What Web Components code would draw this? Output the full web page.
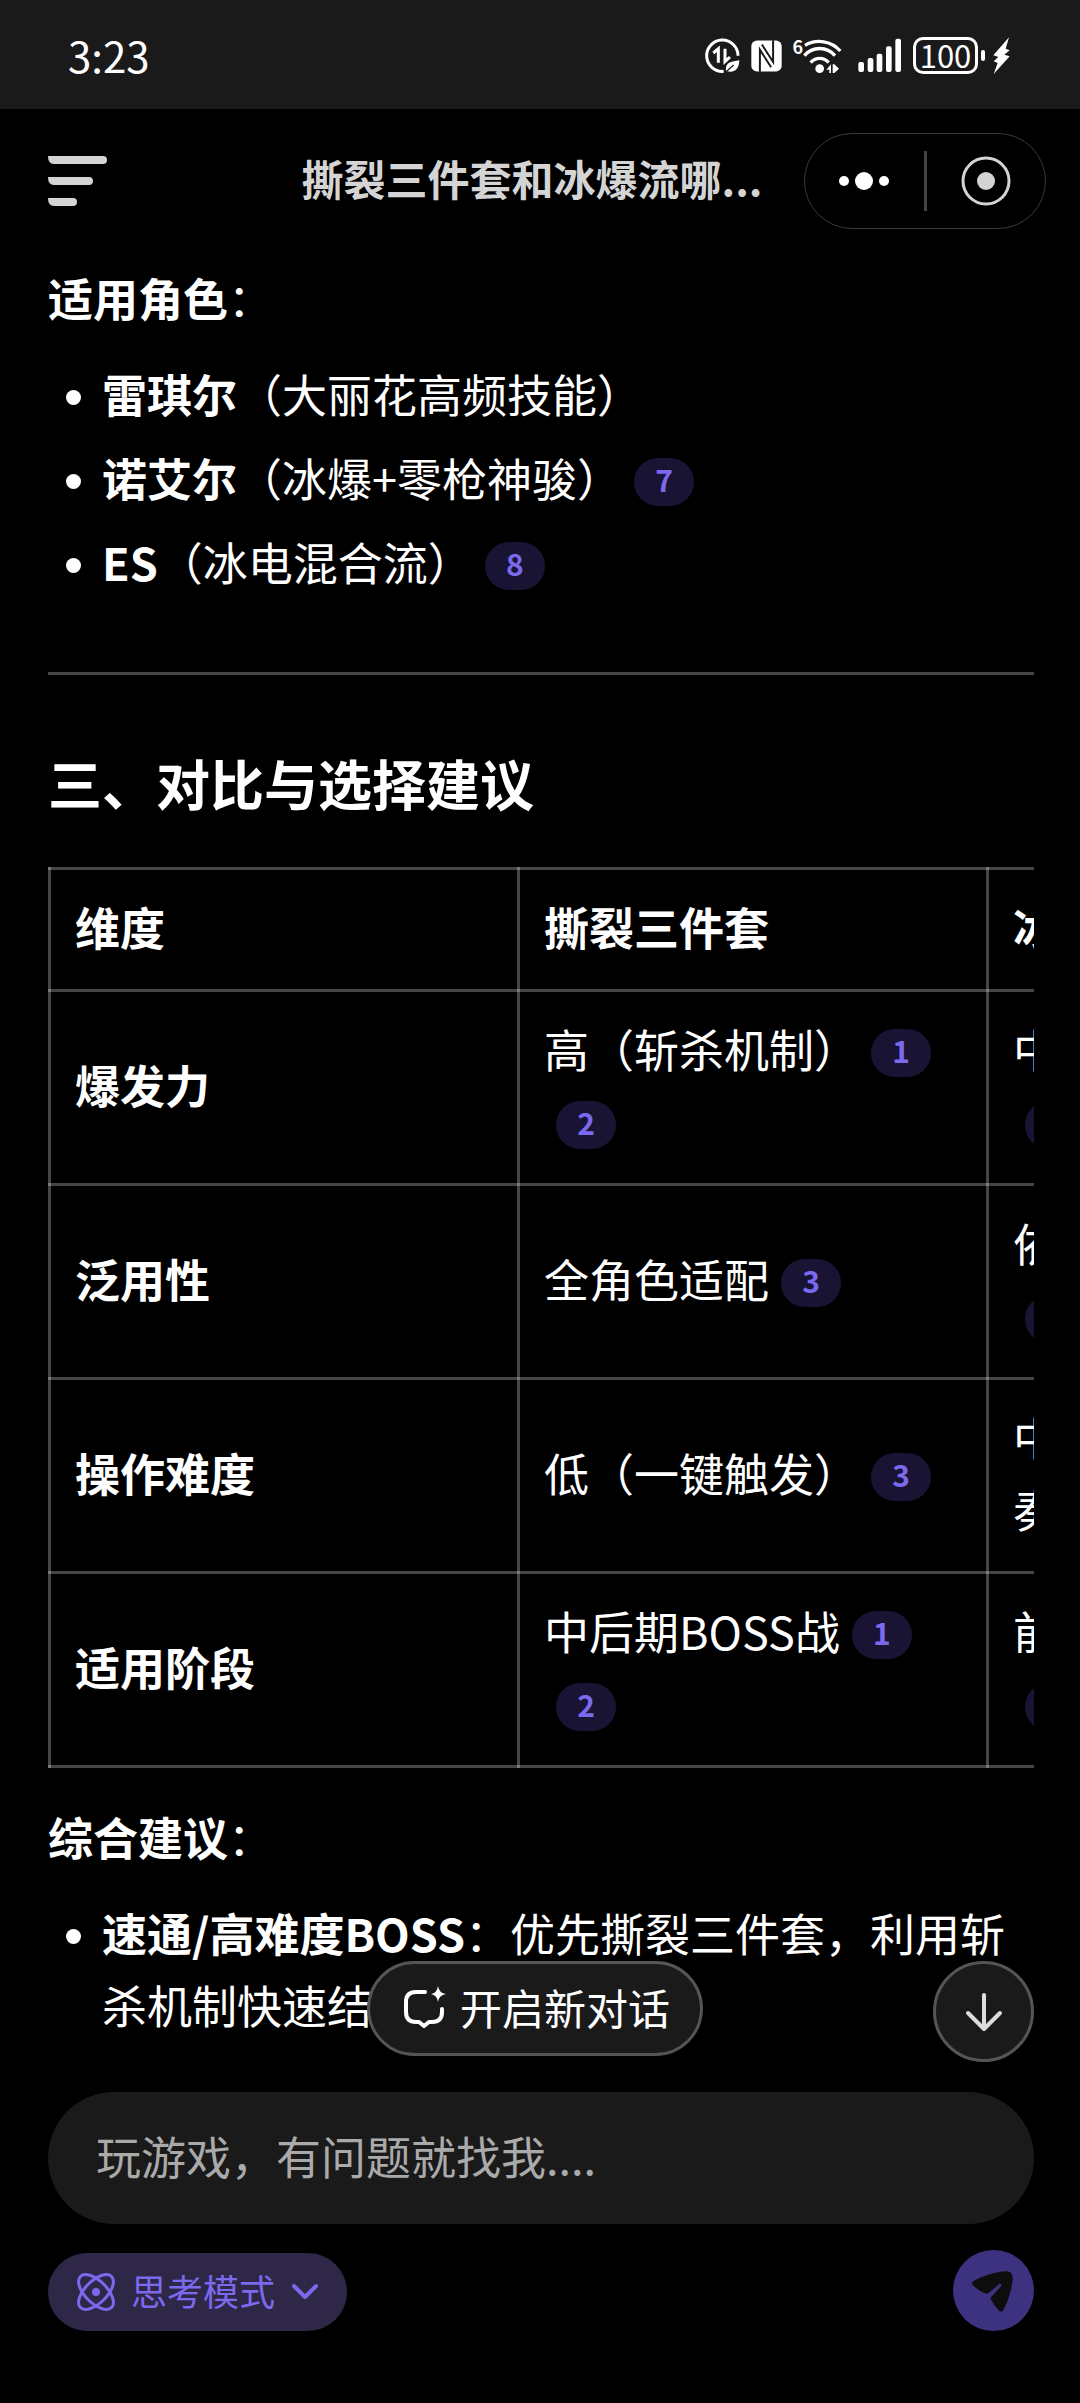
<!DOCTYPE html>
<html lang="zh-CN">
<head>
<meta charset="utf-8">
<meta name="viewport" content="width=device-width, initial-scale=1">
<title>撕裂三件套和冰爆流哪...</title>
<style>
    html, body {
        margin: 0;
        background: #000;
    }

    body {
        --surface: #1a1a1a;
        --line: rgba(255, 255, 255, 0.27);
        --outline: #555;
        --icon: #d4d4d4;
        --accent: #7b69ee;
        --accent-dim: #191433;
        color: #fff;
        font-family: "Noto Sans CJK SC", "Noto Sans", sans-serif;
        font-size: 45px;
        line-height: 72px;
    }
</style>
</head>
<body>
<chat-app>
    <status-bar slot="status" time="3:23" battery="100"></status-bar>
    <nav-bar slot="nav">撕裂三件套和冰爆流哪...</nav-bar>

    <section-label>适用角色</section-label>
    <bullet-list>
        <bullet-item><b>雷琪尔</b>（大丽花高频技能）</bullet-item>
        <bullet-item><b>诺艾尔</b>（冰爆+零枪神骏）<cite-badge>7</cite-badge></bullet-item>
        <bullet-item><b>ES</b>（冰电混合流）<cite-badge>8</cite-badge></bullet-item>
    </bullet-list>
    <section-title>三、对比与选择建议</section-title>
    <compare-table></compare-table>
    <section-label>综合建议</section-label>
    <bullet-list>
        <bullet-item><b>速通/高难度BOSS</b>：优先撕裂三件套，利用斩杀机制快速结</bullet-item>
    </bullet-list>

    <chat-composer slot="composer" placeholder="玩游戏，有问题就找我...."></chat-composer>
</chat-app>

<script>
class ChatApp extends HTMLElement {
    constructor() {
        super();
        this.attachShadow({ mode: 'open' });
        this.shadowRoot.innerHTML = `
            <style>
                :host {
                    display: flex;
                    flex-direction: column;
                    height: 100vh;
                }

                main {
                    flex: 1;
                    min-height: 0;
                    overflow: hidden;
                    padding: 9px 46px 0 48px;
                }
            </style>

            <slot name="status"></slot>
            <slot name="nav"></slot>
            <main><slot></slot></main>
            <slot name="composer"></slot>
        `;
    }
}

class StatusBar extends HTMLElement {
    constructor() {
        super();
        this.attachShadow({ mode: 'open' });
    }

    connectedCallback() {
        this.shadowRoot.innerHTML = `
            <style>
                :host {
                    display: flex;
                    flex: none;
                    box-sizing: border-box;
                    height: 109px;
                    padding: 0 70px 0 68px;
                    justify-content: space-between;
                    align-items: center;
                    background: var(--surface);
                }

                .time {
                    font-size: 42px;
                }

                .icons {
                    display: flex;
                    padding-top: 2px;
                    align-items: center;
                }

                svg {
                    display: block;
                }

                .save { margin-right: 11px; }
                .nfc { margin-right: 10px; }
                .wifi-gen {
                    align-self: flex-start;
                    font-size: 18px;
                    font-weight: 700;
                    line-height: 18px;
                }
                .wifi { margin-right: 16px; }
                .signal { margin-right: 12px; }

                .battery {
                    box-sizing: border-box;
                    width: 65px;
                    height: 37px;
                    border: 3px solid #fff;
                    border-radius: 10px;
                    font-size: 31px;
                    line-height: 29px;
                    text-align: center;
                }

                .nub {
                    width: 4px;
                    height: 11px;
                    margin: 0 8px 0 3px;
                    border-radius: 2px;
                    background: #fff;
                }
            </style>

            <span class="time">${this.getAttribute('time')}</span>
            <div class="icons">
                <svg class="save" width="35" height="35" viewBox="78 115 105 105" fill="none" stroke="#fff">
                    <path d="M134 215A47 47 0 1 1 177 168" stroke-width="9"/>
                    <path d="M103 160L118 147V189M138 147V186L153 172" stroke-width="9"/>
                    <path d="M141 214C138 188 156 186 181 182C180 208 168 222 141 214Z" fill="#fff" stroke="none"/>
                    <path d="M138 219L164 196" stroke="#1a1a1a" stroke-width="4"/>
                </svg>
                <svg class="nfc" width="31" height="32" viewBox="216 121 94 96">
                    <rect x="217" y="122" width="92" height="94" rx="17" fill="#fff"/>
                    <path d="M243 217V150L277 203M283 121V187L249 134" fill="none" stroke="#1a1a1a" stroke-width="6"/>
                </svg>
                <span class="wifi-gen">6</span>
                <svg class="wifi" width="39" height="36" viewBox="368 111 117 108" fill="none" stroke="#fff" stroke-width="10">
                    <path d="M374 133A84 84 0 0 1 480 150M372 164A60 60 0 0 1 464 164M391 185A35 35 0 0 1 445 185"/>
                    <circle cx="418" cy="203" r="13" fill="#fff" stroke="none"/>
                    <path d="M438 206L452 190V216H447V206ZM457 190H462L476 203L462 216H457Z" fill="#fff" stroke="none"/>
                </svg>
                <svg class="signal" width="43" height="35" viewBox="533 114 129 105" fill="#fff">
                    <rect x="534" y="186" width="17" height="30" rx="6"/>
                    <rect x="562" y="174" width="17" height="42" rx="6"/>
                    <rect x="589" y="161" width="17" height="55" rx="6"/>
                    <rect x="617" y="139" width="17" height="77" rx="6"/>
                    <rect x="645" y="116" width="17" height="100" rx="6"/>
                </svg>
                <div class="battery">${this.getAttribute('battery')}</div>
                <div class="nub"></div>
                <svg width="17" height="37" viewBox="937 111 51 111" fill="#fff">
                    <path d="M985 112L938 166L953 171L939 184L951 189L939 222L987 169L971 164L987 151L975 146Z"/>
                </svg>
            </div>
        `;
    }
}

class NavBar extends HTMLElement {
    constructor() {
        super();
        this.attachShadow({ mode: 'open' });
        this.shadowRoot.innerHTML = `
            <style>
                :host {
                    display: grid;
                    flex: none;
                    grid-template-columns: 212px 1fr 242px;
                    height: 144px;
                    padding: 0 34px 0 48px;
                    align-items: center;
                }

                button {
                    display: flex;
                    padding: 0;
                    border: 0;
                    background: none;
                }

                h1 {
                    margin: 0;
                    padding-bottom: 6px;
                    overflow: hidden;
                    color: var(--icon);
                    font-size: 42px;
                    font-weight: 700;
                    text-align: center;
                    white-space: nowrap;
                }

                .capsule {
                    display: grid;
                    grid-template-columns: 1fr 3px 1fr;
                    box-sizing: border-box;
                    height: 96px;
                    border: 1px solid #3a3a3a;
                    border-radius: 48px;
                    align-items: center;
                    justify-items: center;
                }

                .divider {
                    width: 3px;
                    height: 60px;
                    background: #444;
                }
            </style>

            <button aria-label="菜单">
                <svg width="60" height="50" viewBox="0 0 60 50" fill="#d4d4d4">
                    <path d="M0 0H55A4 4 0 0 1 55 8H6Q0 8 0 0ZM0 21H41A4 4 0 0 1 41 29H6Q0 29 0 21ZM0 42H25A4 4 0 0 1 25 50H6Q0 50 0 42Z"/>
                </svg>
            </button>
            <h1><slot></slot></h1>
            <div class="capsule">
                <button aria-label="更多">
                    <svg width="52" height="20" viewBox="0 0 52 20" fill="#fff">
                        <circle cx="6" cy="10" r="5"/>
                        <circle cx="26" cy="10" r="9"/>
                        <circle cx="46" cy="10" r="5"/>
                    </svg>
                </button>
                <span class="divider"></span>
                <button aria-label="关闭">
                    <svg width="50" height="50" viewBox="0 0 50 50">
                        <circle cx="25" cy="25" r="23" fill="none" stroke="#d4d4d4" stroke-width="3"/>
                        <circle cx="25" cy="25" r="9" fill="#d4d4d4"/>
                    </svg>
                </button>
            </div>
        `;
    }
}

class SectionLabel extends HTMLElement {
    constructor() {
        super();
        this.attachShadow({ mode: 'open' });
        this.shadowRoot.innerHTML = `
            <style>
                :host {
                    display: block;
                    margin-bottom: 24px;
                }
            </style>
            <b><slot></slot></b>：
        `;
    }
}

class SectionTitle extends HTMLElement {
    constructor() {
        super();
        this.attachShadow({ mode: 'open' });
        this.shadowRoot.innerHTML = `
            <style>
                :host {
                    display: block;
                }

                hr {
                    height: 3px;
                    margin: 74px 0 72px;
                    border: 0;
                    background: var(--line);
                }

                h2 {
                    margin: 0 0 48px;
                    font-size: 54px;
                    font-weight: 700;
                    line-height: 72px;
                }
            </style>
            <hr>
            <h2><slot></slot></h2>
        `;
    }
}

class BulletList extends HTMLElement {
    constructor() {
        super();
        this.attachShadow({ mode: 'open' });
        this.setAttribute('role', 'list');
        this.shadowRoot.innerHTML = `
            <style>
                :host {
                    display: flex;
                    flex-direction: column;
                    gap: 12px;
                }
            </style>
            <slot></slot>
        `;
    }
}

class BulletItem extends HTMLElement {
    constructor() {
        super();
        this.attachShadow({ mode: 'open' });
        this.setAttribute('role', 'listitem');
        this.shadowRoot.innerHTML = `
            <style>
                :host {
                    display: flex;
                    padding-left: 18px;
                    gap: 21px;
                }

                .dot {
                    flex: none;
                    width: 15px;
                    height: 15px;
                    margin-top: 32px;
                    border-radius: 50%;
                    background: #fff;
                }
            </style>
            <span class="dot"></span>
            <div><slot></slot></div>
        `;
    }
}

class CiteBadge extends HTMLElement {
    constructor() {
        super();
        this.attachShadow({ mode: 'open' });
        this.shadowRoot.innerHTML = `
            <style>
                :host {
                    display: inline-block;
                    box-sizing: border-box;
                    width: 60px;
                    height: 48px;
                    margin-left: 12px;
                    border-radius: 24px;
                    background: var(--accent-dim);
                    color: var(--accent);
                    font-size: 30px;
                    font-weight: 700;
                    line-height: 42px;
                    text-align: center;
                    vertical-align: 5px;
                }
            </style>
            <slot></slot>
        `;
    }
}

class CompareTable extends HTMLElement {
    constructor() {
        super();
        this.attachShadow({ mode: 'open' });
        this.columns = ['维度', '撕裂三件套', '冰爆流'];
        this.rows = [
            ['爆发力', ['高（斩杀机制）', 1, 2], ['中（持续伤害高）', 4]],
            ['泛用性', ['全角色适配', 3], ['依赖冰系角色技能', 5]],
            ['操作难度', ['低（一键触发）', 3], ['中（需要把握技能节奏）']],
            ['适用阶段', ['中后期BOSS战', 1, 2], ['前中期刷图与清怪', 6]]
        ];
    }

    connectedCallback() {
        this.render();
    }

    cell([text, ...refs]) {
        return `<td>${text}${refs.map(n => `<cite-badge>${n}</cite-badge>`).join('')}</td>`;
    }

    render() {
        this.shadowRoot.innerHTML = `
            <style>
                :host {
                    display: block;
                    margin-bottom: 33px;
                    overflow-x: auto;
                    scrollbar-width: none;
                }

                table {
                    table-layout: fixed;
                    width: 1407px;
                    border-spacing: 0;
                    --rule: linear-gradient(var(--line), var(--line));
                    background: var(--rule) 0 100% / 100% 3px no-repeat;
                }

                /* rules are drawn per cell so that they add up where they cross */
                th, td {
                    padding: 24px 24px 26px 27px;
                    background:
                        var(--rule) 0 0 / 100% 3px no-repeat,
                        var(--rule) 0 0 / 3px 100% no-repeat;
                    text-align: left;
                    vertical-align: middle;
                }

                th {
                    font-weight: 700;
                }

                tbody tr:last-child > * {
                    padding-bottom: 29px;
                }
            </style>

            <table>
                <thead>
                    <tr>${this.columns.map(c => `<th scope="col">${c}</th>`).join('')}</tr>
                </thead>
                <tbody>
                    ${this.rows.map(([name, ...cells]) => `
                        <tr><th scope="row">${name}</th>${cells.map(c => this.cell(c)).join('')}</tr>
                    `).join('')}
                </tbody>
            </table>
        `;
    }
}

class ChatComposer extends HTMLElement {
    constructor() {
        super();
        this.attachShadow({ mode: 'open' });
    }

    connectedCallback() {
        this.shadowRoot.innerHTML = `
            <style>
                :host {
                    display: block;
                    flex: none;
                    position: relative;
                    padding: 0 46px 72px 48px;
                    background: #000;
                }

                button, input, select {
                    box-sizing: border-box;
                    margin: 0;
                    padding: 0;
                    border: 0;
                    background: none;
                    color: inherit;
                    font: inherit;
                }

                svg {
                    display: block;
                    flex: none;
                }

                /* floats over the last lines of the conversation */
                .floating {
                    position: absolute;
                    right: 46px;
                    bottom: calc(100% + 30px);
                    left: 36px;
                    display: grid;
                    grid-template-columns: 1fr auto 1fr;
                    align-items: start;
                }

                .new-chat {
                    grid-column: 2;
                    display: flex;
                    height: 95px;
                    padding: 0 30px 4px 33px;
                    gap: 13px;
                    align-items: center;
                    border: 3px solid var(--outline);
                    border-radius: 48px;
                    background: var(--surface);
                    font-size: 42px;
                    line-height: 60px;
                }

                .down {
                    display: flex;
                    width: 101px;
                    height: 101px;
                    align-items: center;
                    justify-content: center;
                    justify-self: end;
                    border: 3px solid var(--outline);
                    border-radius: 50%;
                    background: var(--surface);
                }

                input {
                    display: block;
                    width: 100%;
                    height: 132px;
                    padding: 0 48px 6px;
                    border-radius: 66px;
                    background: var(--surface);
                }

                input::placeholder {
                    color: #aaa;
                    opacity: 1;
                }

                .tools {
                    display: flex;
                    margin-top: 26px;
                    align-items: flex-end;
                    justify-content: space-between;
                }

                .mode {
                    display: flex;
                    height: 78px;
                    padding: 0 28px;
                    align-items: center;
                    border-radius: 39px;
                    background: #2e2748;
                    color: var(--accent);
                    font-size: 36px;
                    line-height: 54px;
                }

                .mode select {
                    margin: 0 15px;
                    padding-bottom: 4px;
                    appearance: none;
                }

                .send {
                    display: flex;
                    width: 81px;
                    height: 81px;
                    align-items: center;
                    justify-content: center;
                    border-radius: 50%;
                    background: #3c327f;
                }
            </style>

            <div class="floating">
                <button class="new-chat">
                    <svg width="44" height="44" viewBox="0 0 44 44" fill="none" stroke="#fff" stroke-width="4" stroke-linecap="round" stroke-linejoin="round">
                        <path d="M22 7H13Q3 7 3 17V27Q3 37 13 37H16L21 41L26 37H29Q39 37 39 27V24"/>
                        <path d="M35 1Q36 8 43 9Q36 10 35 17Q34 10 28 9Q34 8 35 1Z" fill="#fff" stroke="none"/>
                    </svg>
                    开启新对话
                </button>
                <button class="down" aria-label="回到底部">
                    <svg width="40" height="42" viewBox="0 0 40 42" fill="none" stroke="#dcdcdc" stroke-width="4" stroke-linecap="round" stroke-linejoin="round">
                        <path d="M20 4V38M4 22L20 38L36 22"/>
                    </svg>
                </button>
            </div>
            <input type="text" aria-label="输入问题" placeholder="${this.getAttribute('placeholder')}">
            <div class="tools">
                <label class="mode">
                    <svg width="40" height="40" viewBox="0 0 40 40" fill="none" stroke="#7b69ee" stroke-width="3">
                        <ellipse cx="20" cy="20" rx="22" ry="11" transform="rotate(45 20 20)"/>
                        <ellipse cx="20" cy="20" rx="22" ry="11" transform="rotate(-45 20 20)"/>
                        <circle cx="20" cy="20" r="4" fill="#7b69ee" stroke="none"/>
                    </svg>
                    <select aria-label="模式"><option>思考模式</option></select>
                    <svg width="28" height="18" viewBox="0 0 28 18" fill="none" stroke="#7b69ee" stroke-width="4" stroke-linecap="round" stroke-linejoin="round">
                        <path d="M3 3L14 14L25 3"/>
                    </svg>
                </label>
                <button class="send" aria-label="发送">
                    <svg width="81" height="81" viewBox="0 0 243 243">
                        <path d="M61 94C84 79 130 65 160 64Q178 64 179 82C179 108 166 154 151 180Q145 189 137 181C127 171 118 157 112 144L145 108C147 103 143 99 139 102L103 132C86 127 72 118 60 106Q54 99 61 94Z" fill="#0d0d0d"/>
                    </svg>
                </button>
            </div>
        `;
    }
}

customElements.define('cite-badge', CiteBadge);
customElements.define('chat-app', ChatApp);
customElements.define('status-bar', StatusBar);
customElements.define('nav-bar', NavBar);
customElements.define('section-label', SectionLabel);
customElements.define('section-title', SectionTitle);
customElements.define('bullet-list', BulletList);
customElements.define('bullet-item', BulletItem);
customElements.define('compare-table', CompareTable);
customElements.define('chat-composer', ChatComposer);
</script>
</body>
</html>
